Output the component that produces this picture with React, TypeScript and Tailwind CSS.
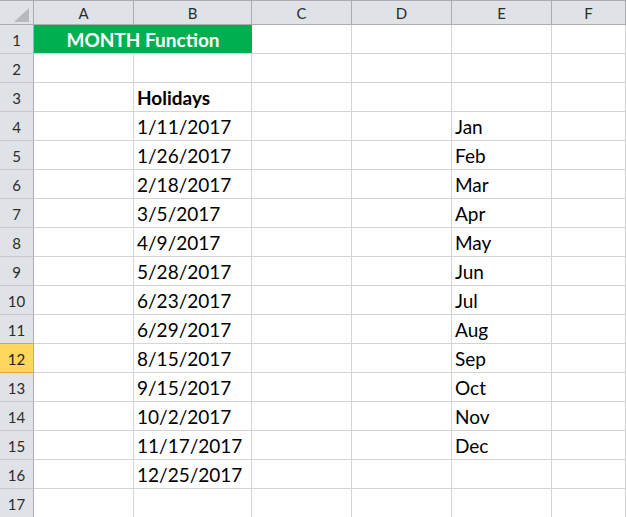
import React from "react";

const cols = ["A", "B", "C", "D", "E", "F"];
const colW = ["w-[100px]", "w-[118px]", "w-[100px]", "w-[100px]", "w-[100px]", "flex-1"];

const dates = [
  "1/11/2017", "1/26/2017", "2/18/2017", "3/5/2017", "4/9/2017", "5/28/2017",
  "6/23/2017", "6/29/2017", "8/15/2017", "9/15/2017", "10/2/2017", "11/17/2017", "12/25/2017",
];
const months = ["Jan", "Feb", "Mar", "Apr", "May", "Jun", "Jul", "Aug", "Sep", "Oct", "Nov", "Dec"];

function cellText(row: number, col: number): { text: string; bold?: boolean } {
  if (row === 3 && col === 1) return { text: "Holidays", bold: true };
  if (row >= 4 && row <= 16 && col === 1) return { text: dates[row - 4] };
  if (row >= 4 && row <= 15 && col === 4) return { text: months[row - 4] };
  return { text: "" };
}

export default function App() {
  const rows = Array.from({ length: 17 }, (_, i) => i + 1);
  return (
    <div
      className="w-[626px] h-[517px] overflow-hidden bg-white text-black"
      style={{ fontFamily: "Lato, 'Open Sans', sans-serif" }}
    >
      {/* Column header */}
      <div className="flex h-[25px] border-t border-[#a9adb2] bg-[#dfe3e8]">
        <div className="relative w-[34px] h-[24px] border-r border-b border-[#a9adb2] shrink-0">
          <svg className="absolute left-[14px] top-[7px]" width="15" height="14" viewBox="0 0 15 14">
            <polygon points="15,0 15,14 0,14" fill="#b5b9be" />
          </svg>
        </div>
        {cols.map((c, i) => (
          <div
            key={c}
            className={`${colW[i]} shrink-0 h-[24px] border-r border-b border-[#a9adb2] flex items-center justify-center text-[15px] text-[#2b2b2b] leading-none pt-[1px]`}
          >
            {c}
          </div>
        ))}
      </div>
      {rows.map((r) => {
        const sel = r === 12;
        const beforeSel = r === 11;
        return (
          <div key={r} className="flex h-[29px]">
            <div
              className={`w-[34px] shrink-0 h-[29px] border-r border-b border-r-[#a9adb2] flex items-center justify-center text-[15px] leading-none pt-[2px] ${
                sel
                  ? "bg-[#ffd65e] border-b-[#e3a53a] text-[#222]"
                  : beforeSel
                  ? "bg-[#dfe3e8] border-b-[#e3a53a] text-[#2b2b2b]"
                  : "bg-[#dfe3e8] border-b-[#c5c9ce] text-[#2b2b2b]"
              }`}
            >
              {r}
            </div>
            {r === 1 ? (
              <>
                <div className="w-[218px] shrink-0 h-[29px] border-b border-[#d4d4d4] bg-[#00b050] text-white font-bold text-[19px] leading-[29px] text-center overflow-hidden">
                  MONTH Function
                </div>
                {[2, 3, 4, 5].map((ci) => (
                  <div
                    key={ci}
                    className={`${colW[ci]} shrink-0 h-[29px] border-r border-b border-[#d4d4d4]`}
                  />
                ))}
              </>
            ) : (
              cols.map((c, ci) => {
                const t = cellText(r, ci);
                return (
                  <div
                    key={c}
                    className={`${colW[ci]} shrink-0 h-[29px] border-r border-b border-[#d4d4d4] pl-[3px] text-[19px] leading-[29px] whitespace-nowrap overflow-hidden ${
                      t.bold ? "font-bold" : ""
                    }`}
                  >
                    {t.text}
                  </div>
                );
              })
            )}
          </div>
        );
      })}
    </div>
  );
}
